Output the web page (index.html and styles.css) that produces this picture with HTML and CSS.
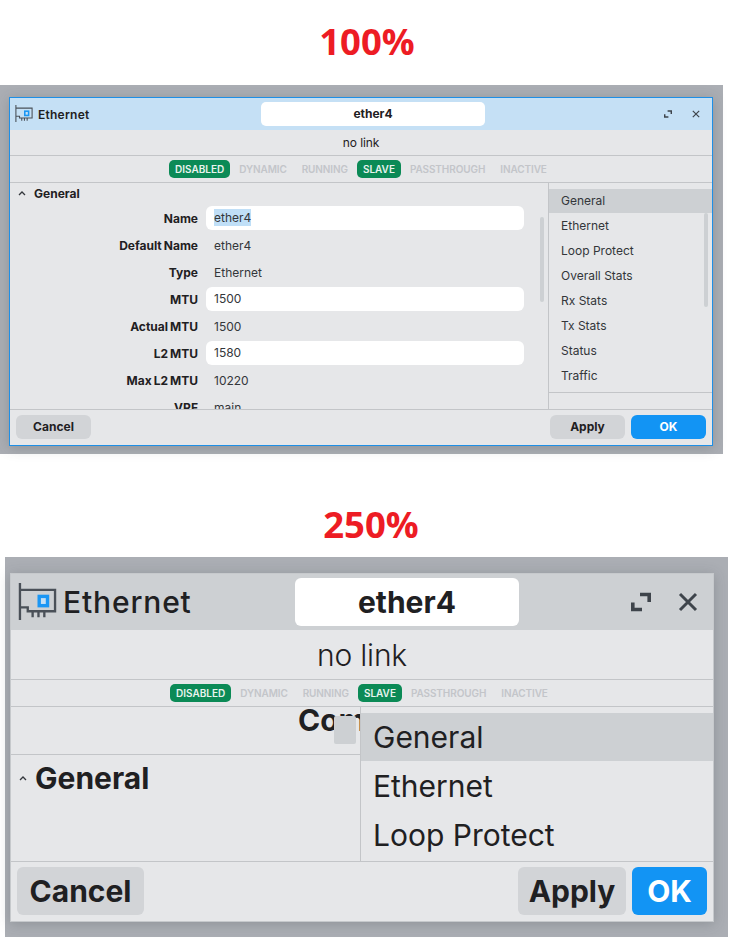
FILE: index.html
```html
<!DOCTYPE html>
<html lang="en">
<head>
<meta charset="utf-8">
<title>Ethernet</title>
<link rel="stylesheet" href="styles.css">
</head>
<body>
<section class="fig fig-a">
  <h2 class="zoom-title zoom-title-a">100%</h2>
  <div class="backdrop backdrop-a">
    <div class="win win-focus">
      <header class="titlebar">
        <div class="win-name">
          <svg class="nic" viewBox="0 0 40 40"><path class="nic-line" d="M2 0V38M2 7H38V29H10V25H2M15 29V35M21 29V35M27 29V35"/><rect class="nic-chip" x="20" y="12" width="12" height="13"/><rect class="nic-core" x="23.5" y="15.5" width="5" height="6"/></svg>
          <span>Ethernet</span>
        </div>
        <div class="name-field">ether4</div>
        <div class="win-actions">
          <svg class="act" viewBox="0 0 20 20"><path class="expand" d="M1.8 10.5V17.5H11M9 2.5H18.2V10"/></svg>
          <svg class="act" viewBox="0 0 20 20"><path d="M2 2L18 18M18 2L2 18"/></svg>
        </div>
      </header>
      <div class="status">no link</div>
      <div class="flags">
        <span class="flag on">DISABLED</span><span class="flag">DYNAMIC</span><span class="flag">RUNNING</span><span class="flag on">SLAVE</span><span class="flag">PASSTHROUGH</span><span class="flag">INACTIVE</span>
      </div>
      <div class="body">
        <div class="form">
          <div class="section"><svg class="chev" viewBox="0 0 8 6"><path d="M1 5L4 2L7 5"/></svg><span>General</span></div>
          <div class="row"><span class="lbl">Name</span><span class="val input"><span class="sel">ether4</span></span></div>
          <div class="row"><span class="lbl">Default Name</span><span class="val">ether4</span></div>
          <div class="row"><span class="lbl">Type</span><span class="val">Ethernet</span></div>
          <div class="row"><span class="lbl">MTU</span><span class="val input">1500</span></div>
          <div class="row"><span class="lbl">Actual MTU</span><span class="val">1500</span></div>
          <div class="row"><span class="lbl">L2 MTU</span><span class="val input">1580</span></div>
          <div class="row"><span class="lbl">Max L2 MTU</span><span class="val">10220</span></div>
          <div class="row"><span class="lbl">VRF</span><span class="val">main</span></div>
          <div class="thumb thumb-form"></div>
        </div>
        <aside class="side">
          <nav class="tabs">
            <div class="tab active">General</div>
            <div class="tab">Ethernet</div>
            <div class="tab">Loop Protect</div>
            <div class="tab">Overall Stats</div>
            <div class="tab">Rx Stats</div>
            <div class="tab">Tx Stats</div>
            <div class="tab">Status</div>
            <div class="tab">Traffic</div>
            <div class="thumb thumb-side"></div>
          </nav>
          <div class="side-foot"></div>
        </aside>
      </div>
      <footer class="foot">
        <button class="btn">Cancel</button>
        <button class="btn push">Apply</button>
        <button class="btn primary">OK</button>
      </footer>
    </div>
  </div>
</section>

<section class="fig fig-b">
  <h2 class="zoom-title zoom-title-b">250%</h2>
  <div class="backdrop backdrop-b">
    <div class="win win-big">
      <header class="titlebar">
        <div class="win-name">
          <svg class="nic" viewBox="0 0 40 40"><path class="nic-line" d="M2 0V38M2 7H38V29H10V25H2M15 29V35M21 29V35M27 29V35"/><rect class="nic-chip" x="20" y="12" width="12" height="13"/><rect class="nic-core" x="23.5" y="15.5" width="5" height="6"/></svg>
          <span>Ethernet</span>
        </div>
        <div class="name-field">ether4</div>
        <div class="win-actions">
          <svg class="act" viewBox="0 0 20 20"><path class="expand" d="M1.8 10.5V17.5H11M9 2.5H18.2V10"/></svg>
          <svg class="act" viewBox="0 0 20 20"><path d="M2 2L18 18M18 2L2 18"/></svg>
        </div>
      </header>
      <div class="status">no link</div>
      <div class="flags">
        <span class="flag on">DISABLED</span><span class="flag">DYNAMIC</span><span class="flag">RUNNING</span><span class="flag on">SLAVE</span><span class="flag">PASSTHROUGH</span><span class="flag">INACTIVE</span>
      </div>
      <div class="body">
        <div class="form">
          <div class="cut-row"><span class="cut-label">Comment</span><span class="cut-thumb"></span></div>
          <div class="section"><svg class="chev" viewBox="0 0 8 6"><path d="M1 5L4 2L7 5"/></svg><span>General</span></div>
        </div>
        <aside class="side">
          <nav class="tabs">
            <div class="tab active">General</div>
            <div class="tab">Ethernet</div>
            <div class="tab">Loop Protect</div>
          </nav>
        </aside>
      </div>
      <footer class="foot">
        <button class="btn">Cancel</button>
        <button class="btn push">Apply</button>
        <button class="btn primary">OK</button>
      </footer>
    </div>
  </div>
</section>
</body>
</html>
```

FILE: styles.css
```css
* { box-sizing: border-box; }
html, body { margin: 0; padding: 0; }
body {
  width: 735px;
  height: 944px;
  overflow: hidden;
  background: #fff;
  color: #1f2022;
  font-family: Inter, "Liberation Sans", sans-serif;
  font-size: 12px;
}

/* Figure headings */
.zoom-title {
  margin: 0;
  color: #ed1c24;
  font-family: "Open Sans", "Liberation Sans", sans-serif;
  font-size: 36.5px;
  font-weight: 700;
  line-height: 50px;
  text-align: center;
}
.zoom-title-a { width: 734px; padding-top: 16px; height: 85px; }
.zoom-title-b { width: 742px; padding-top: 45px; height: 103px; }

/* Grey backdrop around each window */
.backdrop {
  display: flex;
  width: 723px;
  background: #abaeb4;
}
.backdrop-a { height: 369px; padding: 12px 0 0 9px; }
.backdrop-b { height: 380px; margin-left: 5px; padding: 16px 0 0 5px; }

/* Window */
.win {
  display: flex;
  flex-direction: column;
  width: 704px;
  height: 349px;
  background: #e6e7e9;
  box-shadow: 0 2px 12px rgba(70, 74, 80, 0.28);
}
.win-focus { border: 1px solid #1e8fe6; }
.win-big { width: 704px; border: 1px solid #c6c9cc; }

.titlebar {
  display: flex;
  flex: none;
  align-items: center;
  height: 32px;
  background: #c5e0f5;
}
.win-name {
  display: flex;
  flex: none;
  align-items: center;
  gap: 5px;
  width: 251px;
  padding-left: 5px;
  font-weight: 600;
  letter-spacing: 0.25px;
}
.nic { flex: none; width: 18px; height: 18px; }
.nic-line { fill: none; stroke: #4a5058; stroke-width: 2.4; }
.nic-chip { fill: #1a96f4; }
.nic-core { fill: #c5e0f5; }
.name-field {
  flex: none;
  width: 224px;
  height: 24px;
  border-radius: 5px;
  background: #fff;
  font-weight: 700;
  line-height: 24px;
  text-align: center;
}
.win-actions {
  display: flex;
  align-items: center;
  gap: 20px;
  margin-left: auto;
  padding-right: 12px;
}
.act { display: block; width: 8px; height: 8px; }
.act path { fill: none; stroke: #3e444b; stroke-width: 3; }
.act .expand { stroke-width: 3.6; }

.status {
  flex: none;
  height: 26px;
  border-bottom: 1px solid #c3c5c8;
  font-size: 12px;
  letter-spacing: -0.1px;
  line-height: 25px;
  text-align: center;
}
.flags {
  display: flex;
  flex: none;
  align-items: center;
  gap: 3px;
  height: 27px;
  padding-left: 159px;
  border-bottom: 1px solid #c3c5c8;
}
.flag {
  padding: 0 6px;
  border-radius: 5px;
  color: #c3c5c9;
  font-size: 10px;
  font-weight: 600;
  letter-spacing: -0.1px;
  line-height: 18px;
}
.flag.on { background: #0b8a56; color: #e8f3ee; letter-spacing: 0; }

.body { display: flex; flex: 1; min-height: 0; }
.form {
  position: relative;
  flex: none;
  width: 539px;
  overflow: hidden;
  border-right: 1px solid #c3c5c8;
}
.section {
  display: flex;
  align-items: center;
  height: 16px;
  margin: 2px 0 5px;
  padding-left: 8px;
  font-weight: 700;
}
.chev { flex: none; width: 8px; height: 6px; margin-right: 8px; }
.chev path { fill: none; stroke: #33373c; stroke-width: 1.3; }
.row {
  display: flex;
  align-items: center;
  gap: 8px;
  height: 24px;
  margin-bottom: 3px;
}
.lbl { flex: none; width: 188px; font-weight: 700; word-spacing: -0.8px; text-align: right; }
.val { flex: none; width: 318px; padding-left: 8px; color: #33363a; }
.input { height: 24px; border-radius: 6px; background: #fff; line-height: 24px; }
.sel { display: inline-block; height: 17px; background: #c0dff7; line-height: 17px; }

.thumb { position: absolute; width: 4px; border-radius: 2px; background: #cdd0d3; }
.thumb-form { top: 34px; right: 4px; height: 85px; }
.thumb-side { top: 30px; right: 4px; height: 94px; }

.side { display: flex; flex: 1; flex-direction: column; min-width: 0; }
.tabs { position: relative; flex: 1; padding-top: 6px; overflow: hidden; }
.tab { height: 24px; margin-bottom: 1px; padding-left: 12px; color: #33363a; line-height: 24px; }
.tab.active { background: #cdd0d3; }
.side-foot { flex: none; height: 17px; border-top: 1px solid #c3c5c8; }

.foot {
  display: flex;
  flex: none;
  gap: 6px;
  height: 36px;
  padding: 5px 6px 0;
  border-top: 1px solid #c3c5c8;
}
.btn {
  width: 75px;
  height: 24px;
  padding: 0;
  border: 0;
  border-radius: 6px;
  background: #d2d4d7;
  color: #1f2022;
  font: 700 12px/24px Inter, "Liberation Sans", sans-serif;
}
.btn.push { margin-left: auto; }
.btn.primary { background: #1294f4; color: #fff; }

/* 250% window */
.win-big .titlebar { height: 56px; background: #cdd0d3; }
.win-big .win-name { gap: 6px; width: 284px; padding-left: 7px; font-size: 30px; font-weight: 500; letter-spacing: 0.85px; }
.win-big .nic { width: 39px; height: 39px; }
.win-big .name-field { height: 48px; border-radius: 6px; font-size: 30px; line-height: 48px; }
.win-big .win-actions { gap: 27px; padding-right: 15px; }
.win-big .act { width: 20px; height: 20px; }
.win-big .status { height: 50px; font-size: 30px; font-weight: 300; letter-spacing: -0.2px; line-height: 50px; }
.win-big .flag { font-size: 10px; }
.win-big .form { width: 350px; }
.cut-row {
  position: relative;
  height: 48px;
  overflow: hidden;
  border-bottom: 1px solid #c3c5c8;
}
.cut-label {
  display: block;
  width: 500px;
  padding-left: 287px;
  font-size: 30px;
  font-weight: 700;
  line-height: 26px;
}
.cut-thumb {
  position: absolute;
  top: 9px;
  left: 323px;
  width: 22px;
  height: 28px;
  border-radius: 2px;
  background: #cdd0d3;
}
.win-big .section { height: 46px; margin: 0; padding-left: 8px; font-size: 30px; }
.win-big .tab { height: 48px; margin-bottom: 1px; padding-left: 12px; color: #1f2022; font-size: 30px; line-height: 48px; }
.win-big .foot { height: 60px; padding: 5px 6px 0; gap: 6px; }
.win-big .btn { width: 127px; height: 48px; font-size: 30px; line-height: 48px; }
.win-big .btn.push { width: 108px; }
.win-big .btn.primary { width: 75px; }
```
